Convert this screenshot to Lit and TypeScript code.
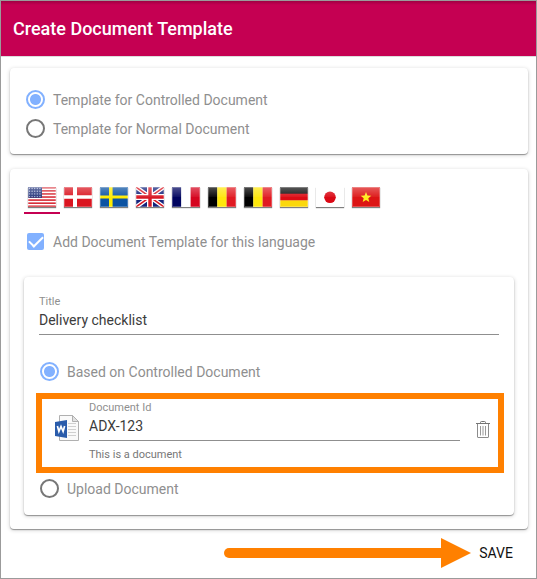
import { LitElement, html, css, svg } from "lit";
import { customElement, state } from "lit/decorators.js";

const star =
  "M14 5l1.4 3.600 3.900.2-3 2.400 1 3.800-3.300-2.100-3.300 2.100 1-3.800-3-2.400 3.900-.2z";

const stripes = [0, 2, 4, 6, 8, 10, 12].map((i) => i * 1.54);

const dots = Array.from({ length: 20 }, (_, i) => [
  1.5 + (i % 5) * 2.6,
  1.5 + Math.floor(i / 5) * 2.7,
]);

const vertical = (a: string, b: string, c: string) => svg`
  <path fill=${a} d="M0 0h9.4v20H0z"/><path fill=${b} d="M9.3 0h9.4v20H9.3z"/><path fill=${c} d="M18.6 0H28v20h-9.4z"/>`;

const flags = [
  {
    name: "English (US)",
    art: svg`<path fill="#fff" d="M0 0h28v20H0z"/>
      ${stripes.map((y) => svg`<path fill="#d5202c" d="M0 ${y}h28v1.54H0z"/>`)}
      <path fill="#26367c" d="M0 0h14v10.8H0z"/>
      ${dots.map(([x, y]) => svg`<circle cx=${x} cy=${y} r=".7" fill="#b4bcdc"/>`)}`,
  },
  {
    name: "Danish",
    art: svg`<path fill="#da1520" d="M0 0h28v20H0z"/><path fill="#fff" d="M9 0h4v8.2h15v3.6H13V20H9v-8.2H0V8.2h9z"/>`,
  },
  {
    name: "Swedish",
    art: svg`<path fill="#0c53a2" d="M0 0h28v20H0z"/><path fill="#ffec00" d="M9 0h3.6v8.4H28v3.2H12.6V20H9v-8.4H0V8.4h9z"/>`,
  },
  {
    name: "English (UK)",
    art: svg`<path fill="#14247c" d="M0 0h28v20H0z"/>
      <path stroke="#fff" stroke-width="4.2" d="M0 0l28 20M28 0L0 20"/>
      <path stroke="#d81824" stroke-width="1.5" d="M0 0l28 20M28 0L0 20"/>
      <path fill="#fff" d="M11 0h6v7h11v6H17v7h-6v-7H0V7h11z"/>
      <path fill="#d81824" d="M12.3 0h3.4v8.3H28v3.4H15.7V20h-3.4v-8.3H0V8.3h12.3z"/>`,
  },
  { name: "French", art: vertical("#00045f", "#ffffff", "#d5051f") },
  { name: "Dutch (Belgium)", art: vertical("#000000", "#ffe80c", "#e01a22") },
  { name: "French (Belgium)", art: vertical("#000000", "#ffe80c", "#e01a22") },
  {
    name: "German",
    art: svg`<path fill="#111" d="M0 0h28v7H0z"/><path fill="#dc0c15" d="M0 6.7h28v7H0z"/><path fill="#fbd80c" d="M0 13.4h28V20H0z"/>`,
  },
  {
    name: "Japanese",
    art: svg`<path fill="#fff" d="M0 0h28v20H0z"/><circle cx="14" cy="10.3" r="5.8" fill="#da0814"/>`,
  },
  {
    name: "Vietnamese",
    art: svg`<path fill="#dc1414" d="M0 0h28v20H0z"/><path fill="#ffec1c" d=${star}/>`,
  },
];

const wordIcon = html`<svg class="word" viewBox="0 0 24 26" width="24" height="26" aria-hidden="true">
  <path d="M4.5.5h13l6 6v19h-19z" fill="#fafafa" stroke="#b0b0b0"/>
  <path d="M17.5.5v6h6z" fill="#e2e2e2" stroke="#b0b0b0"/>
  <path d="M13 8.5h8M13 11.5h8M13 14.5h8M13 17.5h8M13 20.5h8" stroke="#d0d0d0"/>
  <path d="M0 7l12-2v18L0 21z" fill="#2a5cab"/>
  <path d="M2.400 11l1.500 5.500L6 11.500l2.100 5L9.600 11" fill="none" stroke="#fff" stroke-width="1.700"/>
</svg>`;

const trashIcon = html`<svg viewBox="0 0 14 17" width="14" height="17" aria-hidden="true">
  <g fill="none" stroke="#757575">
    <path d="M0 2.5h14"/>
    <path d="M4.5 2.5v-1q0-1 1-1h3q1 0 1 1v1"/>
    <path d="M1.5 3v13q0 .5.5.5h10q.5 0 .5-.5V3" stroke="#8c8c8c"/>
    <path d="M4.500 5v9.500M7 5v9.500M9.500 5v9.500" stroke="#9a9a9a"/>
  </g>
</svg>`;

@customElement("app-root")
export class AppRoot extends LitElement {
  @state() private language = 0;

  static styles = css`
    :host {
      display: block;
      box-sizing: border-box;
      min-height: 100vh;
      border: 1px solid #9b9b9b;
      background: #fff;
      color: #8f8f8f;
      font: 14px/16px Roboto, "Liberation Sans", sans-serif;
    }
    * {
      box-sizing: border-box;
    }
    .header {
      display: flex;
      align-items: center;
      height: 56px;
      padding: 0 12px;
      background: linear-gradient(#a00043, #c50052 4px);
      border-bottom: 1px solid #dcdcdc;
    }
    .heading {
      margin: 0;
      color: #fff;
      font-size: 18px;
      line-height: 24px;
      font-weight: 500;
    }
    .content {
      display: flex;
      flex-direction: column;
      gap: 15px;
      padding: 11px 8px 0 9px;
    }
    .card {
      border-radius: 4px;
      background: #fff;
      box-shadow: 0 1px 1px rgba(0, 0, 0, 0.35), 0 1px 4px rgba(0, 0, 0, 0.2);
    }
    .kind {
      padding: 17px 16px 11px;
    }
    .languages {
      padding: 16px 14px 14px;
    }
    .choice {
      display: flex;
      align-items: center;
      gap: 8px;
      height: 29px;
    }
    .radio {
      appearance: none;
      flex: none;
      width: 19px;
      height: 19px;
      margin: 0;
      border: 2px solid #777;
      border-radius: 50%;
    }
    .radio:checked {
      border-color: #82b1ff;
      background: radial-gradient(circle, #82b1ff 5px, transparent 6px);
    }
    .tabs {
      display: flex;
      flex-wrap: wrap;
    }
    .tab {
      display: flex;
      justify-content: center;
      width: 36px;
      height: 29px;
      padding: 2px 0 0;
      border: 0;
      border-bottom: 2px solid transparent;
      background: none;
    }
    .tab.active {
      border-bottom-color: #c50052;
    }
    .flag {
      display: block;
      box-shadow: 0 1px 1px rgba(0, 0, 0, 0.5);
    }
    .add {
      margin: 13px 0 0 3px;
      gap: 9px;
    }
    .check {
      appearance: none;
      display: grid;
      place-items: center;
      flex: none;
      width: 17px;
      height: 17px;
      margin: 0;
      border: 2px solid #777;
      border-radius: 2px;
    }
    .check:checked {
      border: 0;
      background: #82b1ff;
    }
    .check:checked::before {
      content: "";
      width: 12px;
      height: 6px;
      margin-bottom: 4px;
      border: solid #fff;
      border-width: 0 0 2px 2px;
      transform: rotate(-45deg);
    }
    .source {
      margin-top: 21px;
      padding: 17px 10px 12px 12px;
    }
    .field {
      display: flex;
      flex-direction: column;
      flex: 1;
      min-width: 0;
    }
    .title {
      margin: 0 5px 22px 3px;
    }
    .label,
    .hint {
      font-size: 11px;
    }
    .hint {
      margin-top: 6px;
      color: #777;
    }
    .input {
      width: 100%;
      height: 25px;
      padding: 0 0 5px;
      border: 0;
      border-bottom: 1px solid #8f8f8f;
      border-radius: 0;
      background: none;
      outline: none;
      color: #3c3c3c;
      font: inherit;
    }
    .nested {
      padding-left: 4px;
    }
    .document {
      display: flex;
      align-items: flex-start;
      height: 80px;
      margin: 7px 0 1px;
      padding: 1px 8px 0 13px;
      border: 6px solid #ff8000;
    }
    .word {
      flex: none;
      margin: 15px 10px 0 0;
    }
    .delete {
      display: flex;
      margin: 21px 0 0 16px;
      padding: 0;
      border: 0;
      background: none;
    }
    .footer {
      display: flex;
      align-items: center;
      justify-content: flex-end;
      padding: 6px 15px 6px 0;
    }
    .save {
      height: 36px;
      padding: 0 8px;
      border: 0;
      background: none;
      color: #111;
      font: inherit;
      text-transform: uppercase;
    }
  `;

  render() {
    return html`
      <header class="header"><h1 class="heading">Create Document Template</h1></header>
      <main class="content">
        <section class="card kind">
          <label class="choice"><input class="radio" type="radio" name="kind" checked />Template for Controlled Document</label>
          <label class="choice"><input class="radio" type="radio" name="kind" />Template for Normal Document</label>
        </section>
        <section class="card languages">
          <div class="tabs" role="tablist">
            ${flags.map(
              (flag, i) => html`<button
                class="tab ${i === this.language ? "active" : ""}"
                role="tab"
                aria-label=${flag.name}
                aria-selected=${i === this.language}
                @click=${() => (this.language = i)}
              >
                <svg class="flag" viewBox="0 0 28 20" width="28" height="20" aria-hidden="true">
                  <defs>
                    <linearGradient id="gloss" x1="0" y1="0" x2="0" y2="1">
                      <stop offset="0" stop-color="#fff" stop-opacity=".3" />
                      <stop offset="1" stop-color="#fff" stop-opacity="0.05" />
                    </linearGradient>
                  </defs>
                  ${flag.art}
                  <path d="M0 0h28v10H0z" fill="url(#gloss)" />
                  <path d="M.5.5h27v19H.5z" fill="none" stroke="#fff" stroke-opacity=".25" />
                </svg>
              </button>`
            )}
          </div>
          <label class="choice add"><input class="check" type="checkbox" checked />Add Document Template for this language</label>
          <div class="card source">
            <div class="field title">
              <label class="label" for="title">Title</label>
              <input class="input" id="title" type="text" value="Delivery checklist" />
            </div>
            <label class="choice nested"><input class="radio" type="radio" name="source" checked />Based on Controlled Document</label>
            <div class="document">
              ${wordIcon}
              <div class="field">
                <label class="label" for="document-id">Document Id</label>
                <input class="input" id="document-id" type="text" value="ADX-123" aria-describedby="hint" />
                <span class="hint" id="hint">This is a document</span>
              </div>
              <button class="delete" aria-label="Remove document">${trashIcon}</button>
            </div>
            <label class="choice nested"><input class="radio" type="radio" name="source" />Upload Document</label>
          </div>
        </section>
      </main>
      <footer class="footer">
        <svg class="arrow" viewBox="0 0 247 30" width="247" height="30" aria-hidden="true">
          <path d="M5 15h214" stroke="#ff8000" stroke-width="10" stroke-linecap="round" />
          <path d="M217 0l30 15-30 15z" fill="#ff8000" />
        </svg>
        <button class="save">Save</button>
      </footer>
    `;
  }
}
